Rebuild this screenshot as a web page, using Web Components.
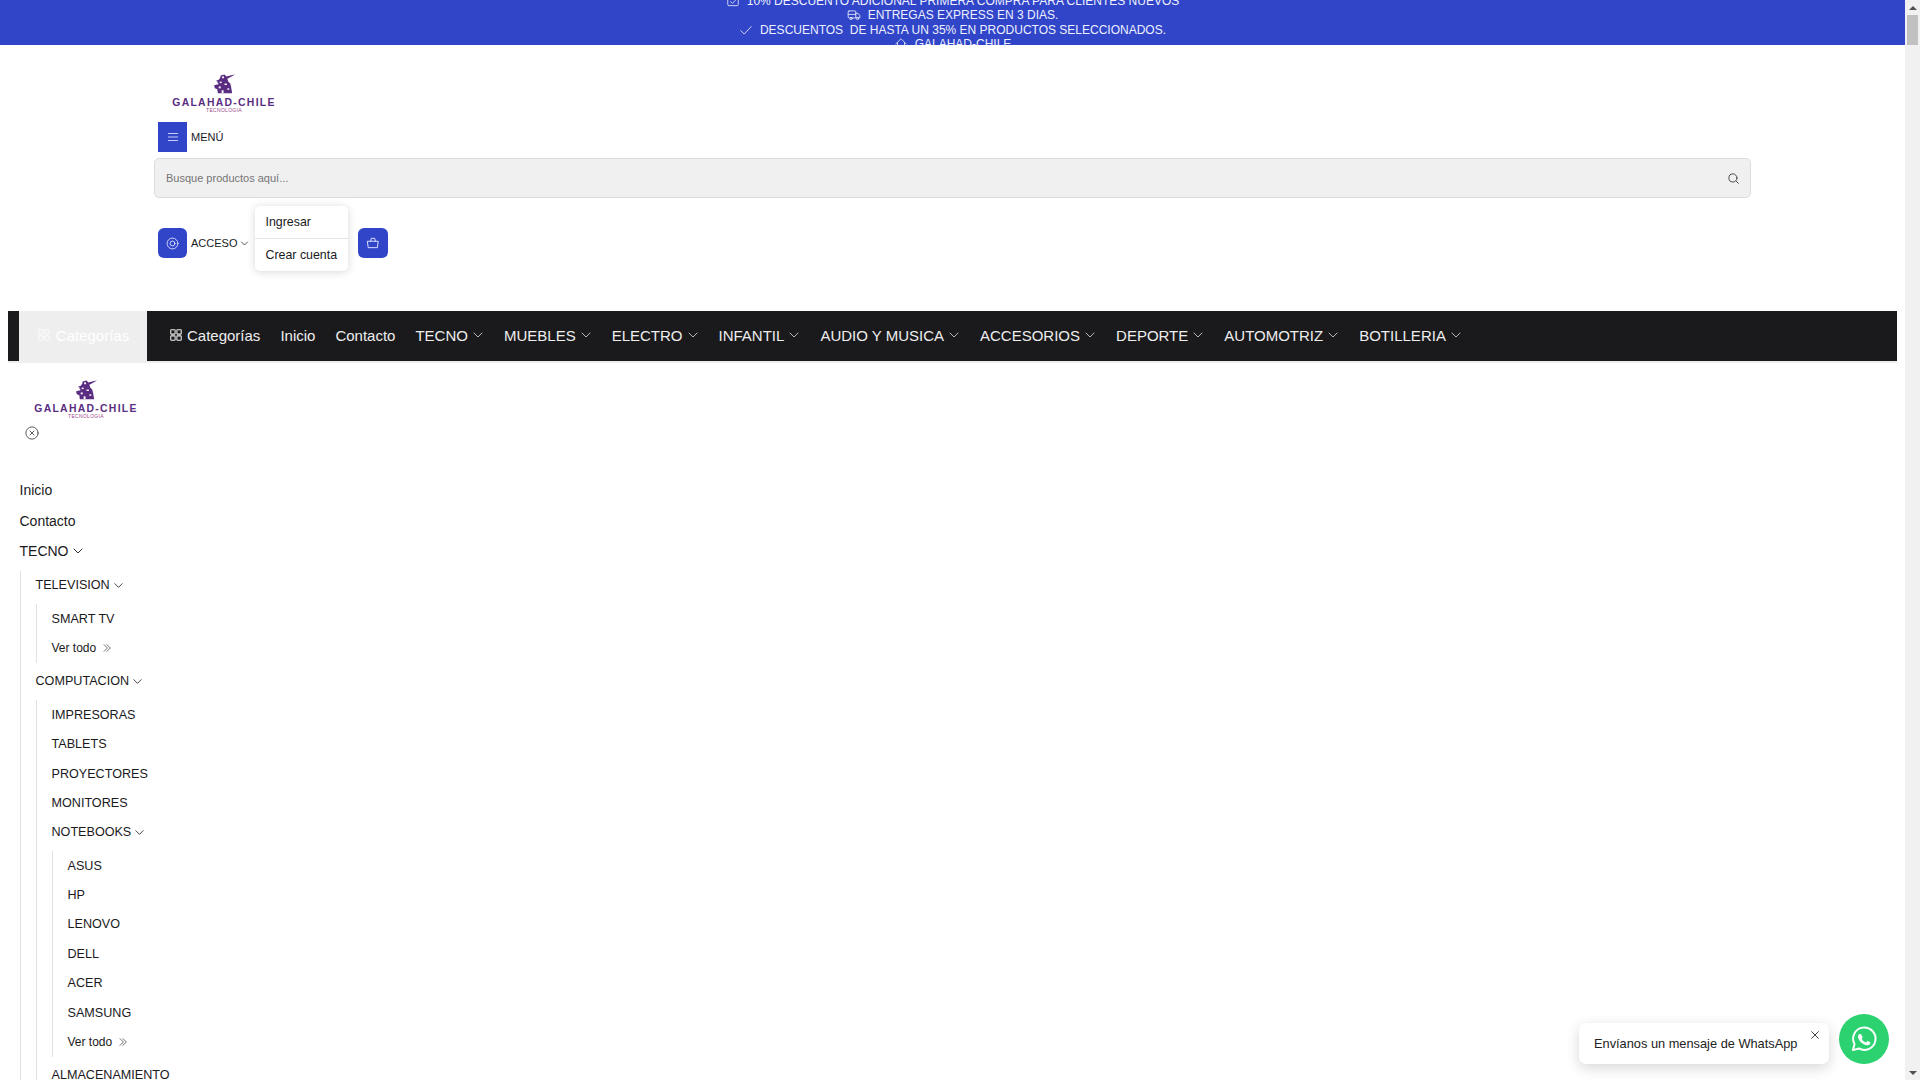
<!DOCTYPE html>
<html lang="es">
<head>
<meta charset="utf-8">
<title>Galahad-Chile</title>
<style>
html, body { margin: 0; height: 100%; overflow: hidden; background: #fff; }
body { font-family: "Liberation Sans", Arial, sans-serif; color: #1a1a1c; }
</style>
</head>
<body>
<app-shell>
  <promo-bar>
    <promo-line icon="ticket">10% DESCUENTO ADICIONAL PRIMERA COMPRA PARA CLIENTES NUEVOS</promo-line>
    <promo-line icon="truck">ENTREGAS EXPRESS EN 3 DIAS.</promo-line>
    <promo-line icon="check">DESCUENTOS &nbsp;DE HASTA UN 35% EN PRODUCTOS SELECCIONADOS.</promo-line>
    <promo-line icon="home">GALAHAD-CHILE</promo-line>
  </promo-bar>
  <site-header></site-header>
  <main-nav>
    <nav-link icon="grid">Categorías</nav-link>
    <nav-link>Inicio</nav-link>
    <nav-link>Contacto</nav-link>
    <nav-link caret>TECNO</nav-link>
    <nav-link caret>MUEBLES</nav-link>
    <nav-link caret>ELECTRO</nav-link>
    <nav-link caret>INFANTIL</nav-link>
    <nav-link caret>AUDIO Y MUSICA</nav-link>
    <nav-link caret>ACCESORIOS</nav-link>
    <nav-link caret>DEPORTE</nav-link>
    <nav-link caret>AUTOMOTRIZ</nav-link>
    <nav-link caret>BOTILLERIA</nav-link>
  </main-nav>
  <side-menu>
    <tree-node top label="Inicio"></tree-node>
    <tree-node top label="Contacto"></tree-node>
    <tree-node top caret label="TECNO">
      <tree-node caret label="TELEVISION">
        <tree-node label="SMART TV"></tree-node>
        <tree-node more label="Ver todo"></tree-node>
      </tree-node>
      <tree-node caret label="COMPUTACION">
        <tree-node label="IMPRESORAS"></tree-node>
        <tree-node label="TABLETS"></tree-node>
        <tree-node label="PROYECTORES"></tree-node>
        <tree-node label="MONITORES"></tree-node>
        <tree-node caret label="NOTEBOOKS">
          <tree-node label="ASUS"></tree-node>
          <tree-node label="HP"></tree-node>
          <tree-node label="LENOVO"></tree-node>
          <tree-node label="DELL"></tree-node>
          <tree-node label="ACER"></tree-node>
          <tree-node label="SAMSUNG"></tree-node>
          <tree-node more label="Ver todo"></tree-node>
        </tree-node>
        <tree-node label="ALMACENAMIENTO"></tree-node>
      </tree-node>
    </tree-node>
  </side-menu>
  <whatsapp-widget>Envíanos un mensaje de WhatsApp</whatsapp-widget>
</app-shell>

<script>
const ICONS = {
  ticket: '<rect x="3" y="6" width="18" height="14" rx="2"/><path d="M8 3v5M16 3v5M8 13l3 3 5-5"/>',
  truck: '<rect x="2" y="5" width="13" height="12" rx="1.5"/><path d="M15 9h4l3 4v4h-7M2 11h13"/><circle cx="7" cy="18" r="2"/><circle cx="18" cy="18" r="2"/>',
  check: '<path d="M3 13l6 6L21 6"/>',
  home: '<path d="M3 12l9-9 9 9M6 10v11h12V10"/>',
  menu: '<path d="M4 6h16M4 12h16M4 18h16"/>',
  search: '<circle cx="11" cy="11" r="7.5"/><path d="M17 17l4 4"/>',
  user: '<circle cx="12" cy="12" r="10"/><circle cx="12" cy="12" r="4.5"/>',
  bag: '<path d="M3 9h18l-1.500 11h-15zM8 9l1-5h6l1 5"/>',
  grid: '<rect x="3" y="3" width="7.5" height="7.5" rx="1"/><rect x="13.5" y="3" width="7.5" height="7.5" rx="1"/><rect x="3" y="13.5" width="7.5" height="7.5" rx="1"/><rect x="13.5" y="13.5" width="7.5" height="7.5" rx="1"/>',
  caret: '<path d="M4 8l8 8 8-8"/>',
  more: '<path d="M5 4l8 8-8 8M12 4l8 8-8 8"/>',
  closeCircle: '<circle cx="12" cy="12" r="10.5"/><path d="M8.5 8.5l7 7M15.5 8.5l-7 7"/>',
  close: '<path d="M4 4l16 16M20 4L4 20"/>'
};

class UiIcon extends HTMLElement {
  connectedCallback() {
    if (this.shadowRoot) return;
    const size = this.getAttribute('size') || 14;
    const sw = this.getAttribute('stroke') || 1.5;
    this.attachShadow({ mode: 'open' }).innerHTML = `<style>
:host { display: inline-flex; flex: none; }
svg { display: block; fill: none; stroke: currentColor; stroke-linecap: round; stroke-linejoin: round; }
</style>
<svg width="${size}" height="${size}" viewBox="0 0 24 24" stroke-width="${sw}">${ICONS[this.getAttribute('name')]}</svg>`;
  }
}
customElements.define('ui-icon', UiIcon);

class AppShell extends HTMLElement {
  constructor() {
    super();
    this.attachShadow({ mode: 'open' }).innerHTML = `<style>
:host { display: grid; grid-template-columns: 1fr 15px; height: 100vh; overflow: hidden; position: relative; }
.page { overflow: hidden; min-width: 0; height: 100vh; }
.track { background: #f1f1f1; display: flex; flex-direction: column; align-items: center; height: 100vh; }
.arrow { height: 15px; display: flex; align-items: center; justify-content: center; flex: none; }
.arrow i { width: 0; height: 0; border-left: 4px solid transparent; border-right: 4px solid transparent; }
.up i { border-bottom: 4px solid #505050; }
.down i { border-top: 4px solid #505050; }
.thumb { width: 11px; height: 30px; background: #c1c1c1; flex: none; }
.rest { flex: 1; }
</style>
<div class="page"><slot></slot></div>
<div class="track">
  <div class="arrow up"><i></i></div>
  <div class="thumb"></div>
  <div class="rest"></div>
  <div class="arrow down"><i></i></div>
</div>`;
  }
}
customElements.define('app-shell', AppShell);

class PromoBar extends HTMLElement {
  constructor() {
    super();
    this.attachShadow({ mode: 'open' }).innerHTML = `<style>
:host { display: flex; flex-direction: column; justify-content: center; height: 45px; overflow: hidden; background: #3045c8; color: #eef0ff; font-size: 12px; line-height: 14.4px; }
</style><slot></slot>`;
  }
}
customElements.define('promo-bar', PromoBar);

class PromoLine extends HTMLElement {
  constructor() {
    super();
    this.attachShadow({ mode: 'open' }).innerHTML = `<style>
:host { display: flex; justify-content: center; align-items: center; gap: 7px; flex: none; height: 14.4px; white-space: nowrap; }
</style><ui-icon name="${this.getAttribute('icon')}" size="14" stroke="1.400"></ui-icon><span><slot></slot></span>`;
  }
}
customElements.define('promo-line', PromoLine);

class SiteLogo extends HTMLElement {
  constructor() {
    super();
    this.attachShadow({ mode: 'open' }).innerHTML = `<style>
:host { display: flex; flex-direction: column; align-items: center; width: 104px; height: 40px; color: #5a2d82; }
svg { display: block; flex: none; margin-top: 2px; }
.name { font: bold 10.4px/9px "Liberation Sans", Arial, sans-serif; letter-spacing: 1.300px; white-space: nowrap; margin-top: 2px; }
.tag { font: 5px/5px "Liberation Sans", Arial, sans-serif; letter-spacing: .3px; color: #9a4a8c; white-space: nowrap; margin-top: 1px; }
</style>
<svg width="23" height="22" viewBox="0 0 24 23" fill="#5a2d82">
  <path d="M8 1.500l4-1 2 2 6-1.500 3-.5-6 3.500-2 1 1 3 2 2 1 4 1 6H5l-.5-4-2.500-1-1-3 3-1 1-3-2-1 3-1 1.500-2z"/>
  <g fill="#fff"><circle cx="10.500" cy="3.500" r="1.100"/><rect x="7" y="8" width="2" height="1.500"/><rect x="12" y="10" width="2.500" height="1.500"/><rect x="6" y="13" width="2" height="2"/><rect x="15" y="15" width="2" height="1.500"/><rect x="9" y="17" width="2" height="3"/><rect x="4" y="9.500" width="1.500" height="1.500"/></g>
</svg>
<div class="name">GALAHAD-CHILE</div>
<div class="tag">TECNOLOGIA</div>`;
  }
}
customElements.define('site-logo', SiteLogo);

class IconButton extends HTMLElement {
  constructor() {
    super();
    const r = this.getAttribute('radius') || 0;
    const w = this.getAttribute('width') || 29;
    this.attachShadow({ mode: 'open' }).innerHTML = `<style>
:host { display: flex; align-items: center; justify-content: center; flex: none; width: ${w}px; height: 30px; border-radius: ${r}px; background: #3045c8; color: #e8ebff; }
</style><slot></slot>`;
  }
}
customElements.define('icon-button', IconButton);

class SiteHeader extends HTMLElement {
  constructor() {
    super();
    this.attachShadow({ mode: 'open' }).innerHTML = `<style>
:host { display: block; padding: 27px 154px 0; height: 266px; box-sizing: border-box; font-size: 11px; }
.logo { padding-left: 18px; height: 40px; }
.bar { display: flex; align-items: center; gap: 4px; margin: 10px 0 0 4px; height: 30px; }
.search { display: flex; align-items: center; justify-content: space-between; height: 40px; box-sizing: border-box; margin-top: 6px; padding: 0 10px 0 11px; background: #f0f0f0; border: 1px solid #dcdcdc; border-radius: 5px; color: #757575; }
.search ui-icon { color: #333; }
.account { display: flex; align-items: flex-start; margin: 8px 0 0 4px; }
.account icon-button { margin-top: 22px; }
.label { display: flex; align-items: center; gap: 3px; height: 30px; margin: 22px 6px 0 4px; }
.drop { width: 93px; background: #fff; border-radius: 5px; box-shadow: 0 1px 8px rgba(0,0,0,.16); font-size: 12.400px; margin-right: 10px; }
.drop div { height: 32px; line-height: 33px; padding-left: 10px; box-sizing: border-box; white-space: nowrap; }
.drop div + div { border-top: 1px solid #e4e4e4; height: 33px; }
</style>
<div class="logo"><site-logo></site-logo></div>
<div class="bar">
  <icon-button><ui-icon name="menu" size="14" stroke="1.400"></ui-icon></icon-button>
  <span>MENÚ</span>
</div>
<div class="search">
  <span>Busque productos aquí...</span>
  <ui-icon name="search" size="13" stroke="1.600"></ui-icon>
</div>
<div class="account">
  <icon-button radius="6"><ui-icon name="user" size="13" stroke="1.600"></ui-icon></icon-button>
  <div class="label">ACCESO <ui-icon name="caret" size="9" stroke="2"></ui-icon></div>
  <div class="drop"><div>Ingresar</div><div>Crear cuenta</div></div>
  <icon-button radius="6" width="30"><ui-icon name="bag" size="14" stroke="1.600"></ui-icon></icon-button>
</div>`;
  }
}
customElements.define('site-header', SiteHeader);

class MainNav extends HTMLElement {
  constructor() {
    super();
    this.attachShadow({ mode: 'open' }).innerHTML = `<style>
:host { display: block; margin: 0 8px; height: 52px; box-sizing: border-box; }
.bar { display: flex; align-items: stretch; height: 50px; background: #1a1a1c; color: #eee; font-size: 15px; border-bottom: 2px solid #eee; }
.all { display: flex; align-items: center; justify-content: center; gap: 5px; width: 128px; margin-left: 11px; padding-bottom: 2px; box-sizing: border-box; background: #eee; color: #fff; flex: none; }
.links { display: flex; align-items: center; gap: 20px; margin-left: 22px; padding-bottom: 2px; }
</style>
<div class="bar">
  <div class="all"><ui-icon name="grid" size="14" stroke="1.500"></ui-icon>Categorías</div>
  <div class="links"><slot></slot></div>
</div>`;
  }
}
customElements.define('main-nav', MainNav);

class NavLink extends HTMLElement {
  constructor() {
    super();
    this.attachShadow({ mode: 'open' }).innerHTML = `<style>
:host { display: flex; align-items: center; gap: 4px; white-space: nowrap; }
</style>
${this.hasAttribute('icon') ? `<ui-icon name="${this.getAttribute('icon')}" size="14" stroke="1.800"></ui-icon>` : ''}
<slot></slot>
${this.hasAttribute('caret') ? '<ui-icon name="caret" size="12" stroke="1.500"></ui-icon>' : ''}`;
  }
}
customElements.define('nav-link', NavLink);

class SideMenu extends HTMLElement {
  constructor() {
    super();
    this.attachShadow({ mode: 'open' }).innerHTML = `<style>
:host { display: block; padding: 15px 0 0 19.500px; }
.logo { padding-left: 14.500px; height: 40px; }
.close { margin: 8px 0 0 5.500px; height: 14px; color: #444; }
.list { margin-top: 35px; }
</style>
<div class="logo"><site-logo></site-logo></div>
<div class="close"><ui-icon name="closeCircle" size="14" stroke="1.500"></ui-icon></div>
<div class="list"><slot></slot></div>`;
  }
}
customElements.define('side-menu', SideMenu);

class TreeNode extends HTMLElement {
  constructor() {
    super();
    const top = this.hasAttribute('top');
    const caret = this.hasAttribute('caret');
    const more = this.hasAttribute('more');
    const font = top ? 14 : more ? 12 : 12.600;
    this.attachShadow({ mode: 'open' }).innerHTML = `<style>
:host { display: block; }
.row { display: flex; align-items: center; gap: ${more ? 6 : 3}px; height: ${top ? 30.500 : 29.400}px; font-size: ${font}px; white-space: nowrap; }
.sub { border-left: 1px solid #e2e2e2; padding-left: 15px; margin: 4px 0; }
</style>
<div class="row">
  <span class="text"></span>
  ${caret ? `<ui-icon name="caret" size="${top ? 12 : 11}" stroke="1.800"></ui-icon>` : ''}
  ${more ? '<ui-icon name="more" size="10" stroke="1.500"></ui-icon>' : ''}
</div>
${caret ? '<div class="sub"><slot></slot></div>' : ''}`;
    this.shadowRoot.querySelector('.text').textContent = this.getAttribute('label');
  }
}
customElements.define('tree-node', TreeNode);

class WhatsappWidget extends HTMLElement {
  constructor() {
    super();
    this.attachShadow({ mode: 'open' }).innerHTML = `<style>
:host { position: absolute; right: 31px; bottom: 16px; display: flex; align-items: flex-end; gap: 10px; }
.pop { position: relative; width: 250px; height: 41px; box-sizing: border-box; padding-left: 15px; padding-bottom: 1px; display: flex; align-items: center; background: #fff; border-radius: 7px; box-shadow: 0 4px 14px rgba(0,0,0,.16); font-size: 12.800px; color: #222; }
.x { position: absolute; right: 9px; top: 7px; color: #333; }
.btn { width: 50px; height: 50px; border-radius: 50%; background: #2bd26f; display: flex; align-items: center; justify-content: center; }
svg { display: block; }
</style>
<div class="pop"><slot></slot><ui-icon class="x" name="close" size="10" stroke="2.200"></ui-icon></div>
<div class="btn">
  <svg width="28" height="28" viewBox="0 0 24 24" fill="none" stroke="#fff" stroke-width="1.700" stroke-linejoin="round">
    <path d="M2.500 21.500l1.400-5.100A9.600 9.600 0 1 1 7.600 20.100z"/>
    <path transform="translate(2.400 2.400) scale(.8)" fill="#fff" stroke="none" d="M9 7.200c-.3-.6-.5-.6-.8-.6h-.6c-.2 0-.6.1-.9.4-.3.4-1.200 1.100-1.200 2.700s1.200 3.200 1.300 3.400c.2.200 2.300 3.600 5.600 4.900 2.800 1.100 3.300.9 4 .8.600-.1 2-.8 2.200-1.600.3-.8.300-1.400.2-1.600-.1-.1-.3-.2-.6-.4l-2.100-1c-.3-.1-.5-.2-.7.1l-1 1.200c-.2.200-.3.300-.6.100-.3-.1-1.300-.5-2.500-1.500-.9-.8-1.500-1.800-1.700-2.100-.2-.3 0-.5.100-.6l.5-.5.3-.5c.1-.2 0-.4 0-.5z"/>
  </svg>
</div>`;
  }
}
customElements.define('whatsapp-widget', WhatsappWidget);
</script>
</body>
</html>
